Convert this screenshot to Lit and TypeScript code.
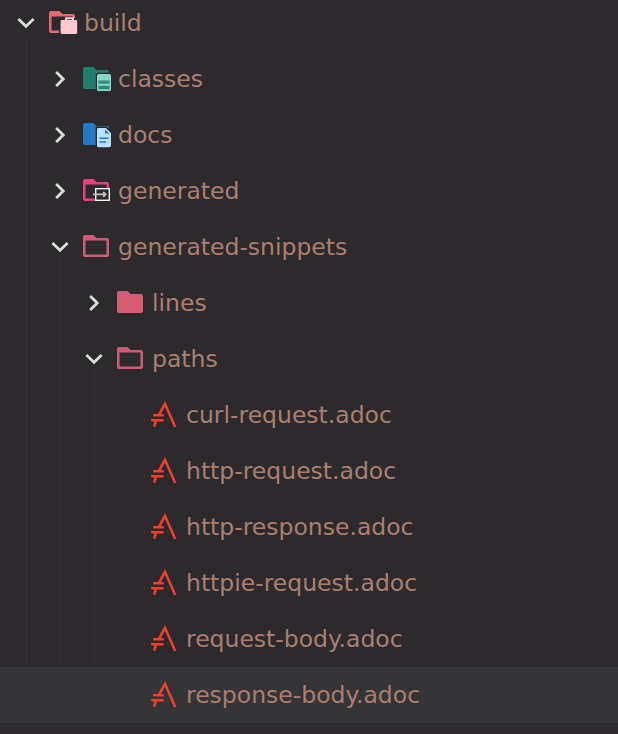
import { LitElement, html, css, svg, nothing } from 'lit';
import { customElement } from 'lit/decorators.js';

interface TreeNode {
  name: string;
  icon: string;
  open?: boolean;
  active?: boolean;
  children?: TreeNode[];
}

const FOLDER_FILLED = 'M2 2H10.5L13.5 5H24A2 2 0 0 1 26 7V22A2 2 0 0 1 24 24H2A2 2 0 0 1 0 22V4A2 2 0 0 1 2 2Z';
const FOLDER_OUTLINE = `${FOLDER_FILLED}M2.5 7.6V21.5H23.5V7.6Z`;

const asciidoc = svg`
  <g fill="none" stroke="#f1412e" stroke-width="2.5">
    <path d="M7.4 14.8 14 2.8 24.2 26"/>
    <path d="M2.2 14.2H12.6M0.2 19.2H12.6M5.2 19.2 3 25.6"/>
  </g>`;

const ICONS: Record<string, unknown> = {
  build: svg`
    <path fill="#e46a6d" fill-rule="evenodd" d="${FOLDER_OUTLINE}"/>
    <path fill="#2c2a2d" d="M10 9H30V28H10Z"/>
    <path fill="none" stroke="#ffc8d2" stroke-width="2" d="M17 12V9.2H24V12"/>
    <rect x="11.6" y="11" width="16.6" height="14" rx="1.4" fill="#ffc8d2"/>`,
  classes: svg`
    <path fill="#1f7f6c" d="${FOLDER_FILLED}"/>
    <rect x="12.8" y="7.8" width="16.4" height="19.4" rx="2" fill="#2c2a2d"/>
    <rect x="14" y="9" width="14" height="17" rx="1.6" fill="#8ad6c6"/>
    <path fill="#2f8f7c" d="M15.4 15.4H26.6V18.8H15.4ZM15.4 20.8H26.6V24.2H15.4Z"/>`,
  docs: svg`
    <path fill="#2479c6" d="${FOLDER_FILLED}"/>
    <path fill="#2c2a2d" d="M12.6 5.6H23.6L29.4 11V27.4H12.6Z"/>
    <path fill="#b9e1fb" d="M15.4 7H22.8L28 12V24.6A1.6 1.6 0 0 1 26.4 26.2H15.6A1.6 1.6 0 0 1 14 24.6V8.4A1.4 1.4 0 0 1 15.4 7Z"/>
    <path fill="#2479c6" d="M22 8.4 26.4 12.6H22ZM16.4 16.4H25.6V18H16.4ZM16.4 20.2H23V21.8H16.4Z"/>`,
  generated: svg`
    <path fill="#e8407f" fill-rule="evenodd" d="${FOLDER_OUTLINE}"/>
    <rect x="12" y="11" width="15" height="13" fill="#2c2a2d"/>
    <rect x="12.7" y="11.7" width="13.6" height="11.6" fill="none" stroke="#f4f0f2" stroke-width="1.4"/>
    <path fill="none" stroke="#c4c0c3" stroke-width="1.8" d="M10 17.4H22.4M20.2 15 22.6 17.4 20.2 19.8"/>`,
  folder: svg`<path fill="#d25a74" fill-rule="evenodd" d="${FOLDER_OUTLINE}"/>`,
  lines: svg`<path fill="#d65c76" d="${FOLDER_FILLED}"/>`,
  adoc: asciidoc,
};

const adoc = (name: string, active = false): TreeNode => ({ name, icon: 'adoc', active });

const TREE: TreeNode = {
  name: 'build',
  icon: 'build',
  open: true,
  children: [
    { name: 'classes', icon: 'classes' },
    { name: 'docs', icon: 'docs' },
    { name: 'generated', icon: 'generated' },
    {
      name: 'generated-snippets',
      icon: 'folder',
      open: true,
      children: [
        { name: 'lines', icon: 'lines' },
        {
          name: 'paths',
          icon: 'folder',
          open: true,
          children: [
            adoc('curl-request.adoc'),
            adoc('http-request.adoc'),
            adoc('http-response.adoc'),
            adoc('httpie-request.adoc'),
            adoc('request-body.adoc'),
            adoc('response-body.adoc', true),
          ],
        },
      ],
    },
  ],
};

@customElement('app-root')
export class AppRoot extends LitElement {
  static styles = css`
    :host {
      display: block;
      height: 734px;
      overflow: hidden;
      background: #2c2a2d;
      font-family: "DejaVu Sans", sans-serif;
    }

    .tree {
      margin-top: -5px;
    }

    .row {
      display: flex;
      align-items: center;
      height: 56px;
      color: #ab7f6d;
      font-size: 23.5px;
      white-space: nowrap;
    }

    .row.active {
      background: #353437;
    }

    .chevron {
      width: 32px;
      height: 28px;
      flex: none;
    }

    .icon {
      width: 32px;
      height: 28px;
      margin-right: 3px;
      flex: none;
      overflow: visible;
    }

    .group {
      position: relative;
    }

    .group::before {
      content: "";
      position: absolute;
      top: -17px;
      bottom: 0;
      left: var(--guide);
      width: 1px;
      background: #333135;
      z-index: 1;
    }
  `;

  private renderChevron(node: TreeNode) {
    if (node.icon === 'adoc') {
      return html`<span class="chevron"></span>`;
    }
    const d = node.open ? 'M1.4 10 9 17.2 16.6 10' : 'M5.2 7 12.2 14 5.2 21';
    return html`<svg class="chevron" viewBox="0 0 32 28">
      <path d="${d}" fill="none" stroke="#dcdcdc" stroke-width="2.8"/>
    </svg>`;
  }

  private renderNode(node: TreeNode, depth: number): unknown {
    return html`
      <div class="row ${node.active ? 'active' : ''}" style="padding-left: ${17 + depth * 34}px">
        ${this.renderChevron(node)}
        <svg class="icon" viewBox="0 0 32 28">${ICONS[node.icon]}</svg>
        <span>${node.name}</span>
      </div>
      ${node.children
        ? html`<div class="group" style="--guide: ${26 + depth * 34}px">
            ${node.children.map((child) => this.renderNode(child, depth + 1))}
          </div>`
        : nothing}
    `;
  }

  render() {
    return html`<div class="tree">${this.renderNode(TREE, 0)}</div>`;
  }
}
